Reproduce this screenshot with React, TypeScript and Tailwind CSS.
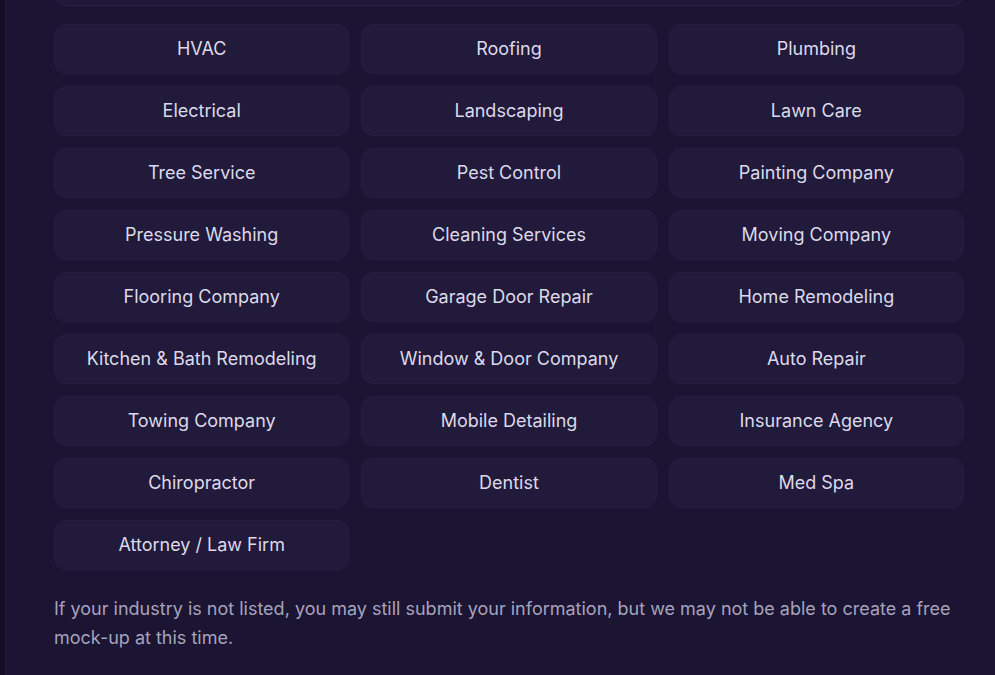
const industries = [
  "HVAC",
  "Roofing",
  "Plumbing",
  "Electrical",
  "Landscaping",
  "Lawn Care",
  "Tree Service",
  "Pest Control",
  "Painting Company",
  "Pressure Washing",
  "Cleaning Services",
  "Moving Company",
  "Flooring Company",
  "Garage Door Repair",
  "Home Remodeling",
  "Kitchen & Bath Remodeling",
  "Window & Door Company",
  "Auto Repair",
  "Towing Company",
  "Mobile Detailing",
  "Insurance Agency",
  "Chiropractor",
  "Dentist",
  "Med Spa",
  "Attorney / Law Firm",
];

export default function App() {
  return (
    <div
      className="flex min-h-[675px] h-[675px] overflow-hidden bg-[#140f26]"
      style={{ fontFamily: "Inter, 'Noto Sans', sans-serif" }}
    >
      <div className="w-[5px] shrink-0" />
      <section className="flex-1 border-l border-[#241c3c] bg-[#1b1432] pl-[48px] pr-[31px]">
        {/* bottom edge of the field above the list */}
        <div className="-mt-[40px] h-[46px] rounded-b-xl border border-[#2b2347] bg-[#201838]" />

        <div className="mt-[18px] grid grid-cols-3 gap-3">
          {industries.map((name) => (
            <button
              key={name}
              type="button"
              className="flex h-[50px] items-center justify-center rounded-xl border border-[#261e40] bg-[#211a3a] pb-[2px] text-[18px] text-[#dcd9ea]"
            >
              {name}
            </button>
          ))}
        </div>

        <p className="mt-[24px] text-[18px] leading-[29px] text-[#a6a3bc]">
          If your industry is not listed, you may still submit your information, but we may not be able to create a
          free mock-up at this time.
        </p>
      </section>
    </div>
  );
}
